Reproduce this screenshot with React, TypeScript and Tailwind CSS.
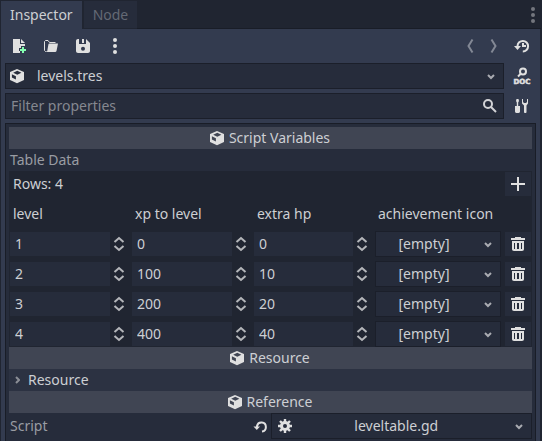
import type { ReactNode } from "react";

type IconProps = { children: ReactNode; className?: string };

function Icon({ children, className = "fill-[#e0e0e0]" }: IconProps) {
  return (
    <svg viewBox="0 0 16 16" className={`h-4 w-4 shrink-0 ${className}`} aria-hidden="true">
      {children}
    </svg>
  );
}

const CubeIcon = () => (
  <Icon>
    <path
      fillRule="evenodd"
      d="M8 .9 15 4v8l-7 3.200L1 12V4zM8.300 2.800 4.200 4.700l4.100 2 4.100-2zM2.900 6.300v3.200l4 2V8.300z"
    />
  </Icon>
);

const NewIcon = () => (
  <Icon>
    <path d="M2 1v14h7v-2H8v-3h2V8h4V6H9V1zM10 1v4h4z" />
    <path className="fill-[#84ffb1]" d="M11 9h2v2h2v2h-2v2h-2v-2H9v-2h2z" />
  </Icon>
);

const FolderIcon = () => (
  <Icon>
    <path
      d="M3.500 13.500H2.500l-1-1V3.500l1-1h2.500l1.500 2h6"
      className="fill-none stroke-[#e0e0e0]"
    />
    <path d="M6.500 5.500H15l-1.500 7.500c-.2.700-.7 1-1.300 1H3c.9-.2 1.200-.7 1.300-1.300l1-5.800c.2-.9.500-1.400 1.200-1.400z" />
  </Icon>
);

const SaveIcon = () => (
  <Icon>
    <path
      fillRule="evenodd"
      d="M3 1C1.900 1 1 1.900 1 3v10c0 1.100.9 2 2 2h10c1.100 0 2-.9 2-2V5l-4-4v5H4V1zM8 8.700a2 2 0 1 1 0 4 2 2 0 0 1 0-4z"
    />
    <path d="M7 1h2v4H7z" />
  </Icon>
);

const DotsIcon = ({ className }: { className?: string }) => (
  <Icon className={className}>
    <circle cx="8" cy="2" r="2" />
    <circle cx="8" cy="8" r="2" />
    <circle cx="8" cy="14" r="2" />
  </Icon>
);

const HistoryIcon = () => (
  <Icon>
    <path
      d="M3.500 9V8a5.300 5.300 0 1 1 5.300 5.500"
      className="fill-none stroke-[#e0e0e0] stroke-2"
    />
    <path d="M0 8h7l-3.500 4zM8 5h2v2h2v2H8z" />
  </Icon>
);

const DocIcon = () => (
  <Icon className="overflow-visible fill-[#e0e0e0]">
    <circle cx="9" cy="3.500" r="3" className="fill-none stroke-[#e0e0e0] stroke-2" />
    <path d="M7 5.500 4 8.500" className="stroke-[#e0e0e0] stroke-2" />
    <text
      x="8"
      y="16"
      textAnchor="middle"
      className="stroke-[#e0e0e0] stroke-[0.5] font-['DejaVu_Sans'] text-[7px] font-bold"
    >
      DOC
    </text>
  </Icon>
);

const ToolsIcon = () => (
  <Icon>
    <path d="M2.500 1h2l.5 2-.8 1.500V8H6v5.500C6 15 5 15 3.500 15S1 15 1 13.500V8h1.800V4.500L2 3zM8 1h1v3l1 1h2l1-1V1h1v4.500L12.500 7.500V14c0 .6-.4 1-1.200 1s-1.300-.4-1.300-1V7.500L8 5.500z" />
  </Icon>
);

const SearchIcon = () => (
  <Icon>
    <circle cx="6" cy="6" r="4" className="fill-none stroke-[#d2d3d6] stroke-2" />
    <path d="m9 9 5 5" className="stroke-[#d2d3d6] stroke-2" />
  </Icon>
);

const TrashIcon = () => (
  <Icon>
    <path d="M5 1h6v1h4v2H1V2h4z" />
    <path
      fillRule="evenodd"
      d="M2 5h12v8c0 1.300-.7 2-2 2H4c-1.300 0-2-.7-2-2zM4 7v6h1V7zM7 7v6h2V7zM11 7v6h1V7z"
    />
  </Icon>
);

const PlusIcon = () => (
  <Icon>
    <path d="M7 1h2v6h6v2H9v6H7V9H1V7h6z" />
  </Icon>
);

const RevertIcon = () => (
  <Icon>
    <path
      d="M4 10V8a4.500 4.500 0 1 1 5 5.500"
      className="fill-none stroke-[#e0e0e0] stroke-2"
    />
    <path d="M.500 8.500h6.500L3.800 12z" />
  </Icon>
);

const GearIcon = () => (
  <Icon>
    <circle cx="8" cy="8" r="3.500" className="fill-none stroke-[#e0e0e0] stroke-3" />
    <path
      d="M8 1v3M8 12v3M1 8h3M12 8h3M3 3l2.200 2.200M10.800 10.800 13 13M13 3l-2.200 2.200M5.200 10.800 3 13"
      className="stroke-[#e0e0e0] stroke-[2.4]"
    />
  </Icon>
);

function Chevron({ dir }: { dir: "left" | "right" }) {
  return (
    <Icon>
      <path
        d={dir === "left" ? "M10.500 1.500 6.500 8l4 6.500" : "M5.500 1.500 9.500 8l-4 6.500"}
        className="fill-none stroke-[#838895] stroke-2"
      />
    </Icon>
  );
}

type PickerProps = { label: string; value: string; className: string; arrow: string };

function Picker({ label, value, className, arrow }: PickerProps) {
  return (
    <div className="relative min-w-0 grow">
      <select
        aria-label={label}
        className={`block h-[26px] w-full appearance-none border border-[#1b1f2a] bg-[#262c3b] outline-none ${className}`}
      >
        <option>{value}</option>
      </select>
      <svg
        viewBox="0 0 8 6"
        className={`pointer-events-none absolute top-[11px] h-1.5 w-2 ${arrow}`}
        aria-hidden="true"
      >
        <path d="m1 1 3 3 3-3" className="fill-none stroke-[#a9abb1] stroke-2" />
      </svg>
    </div>
  );
}

function Category({ title }: { title: string }) {
  return (
    <h2 className="flex h-[22px] items-center justify-center gap-1 bg-[#404553] pr-0.5">
      <CubeIcon />
      {title}
    </h2>
  );
}

function NumberField({ label, value }: { label: string; value: number }) {
  return (
    <div className="flex h-6 items-center">
      <input
        type="text"
        inputMode="numeric"
        aria-label={label}
        defaultValue={value}
        className="h-6 w-0 grow bg-[#262c3b] px-[5px] pb-0.5 outline-none"
      />
      <svg viewBox="0 0 18 16" className="h-4 w-[18px] shrink-0" aria-hidden="true">
        <path
          d="M4.500 6 9 2l4.500 4M4.500 10 9 14l4.500-4"
          className="fill-none stroke-[#b4b6ba] stroke-2"
        />
      </svg>
    </div>
  );
}

const columns = ["level", "xp to level", "extra hp", "achievement icon"];
const rows = [
  [1, 0, 0],
  [2, 100, 10],
  [3, 200, 20],
  [4, 400, 40],
];
const rowGrid =
  "grid h-[26px] grid-cols-[118fr_118fr_117fr_126fr_26px] items-center gap-1";

function LevelTable() {
  return (
    <section className="bg-[#202531] px-px">
      <div className="flex h-[26px] items-center justify-between">
        <span className="pl-[3px]">Rows: 4</span>
        <button
          aria-label="Add row"
          className="flex h-6 w-[26px] items-center justify-center bg-[#262c3b]"
        >
          <PlusIcon />
        </button>
      </div>
      <table className="block pt-1">
        <thead className="block">
          <tr className={rowGrid}>
            {columns.map((name) => (
              <th key={name} className="pl-[3px] text-left font-normal whitespace-nowrap">
                {name}
              </th>
            ))}
          </tr>
        </thead>
        <tbody className="flex flex-col gap-1 pt-1">
          {rows.map((row) => (
            <tr key={row[0]} className={rowGrid}>
              {row.map((value, i) => (
                <td key={columns[i]}>
                  <NumberField label={`${columns[i]}, row ${row[0]}`} value={value} />
                </td>
              ))}
              <td>
                <Picker
                  label={`achievement icon, row ${row[0]}`}
                  value="[empty]"
                  className="pr-7 text-center [text-align-last:center]"
                  arrow="right-[9px]"
                />
              </td>
              <td>
                <button
                  aria-label={`Delete row ${row[0]}`}
                  className="flex h-6 w-[26px] items-center justify-center bg-[#262c3b]"
                >
                  <TrashIcon />
                </button>
              </td>
            </tr>
          ))}
        </tbody>
      </table>
    </section>
  );
}

export default function App() {
  return (
    <main className="flex h-screen flex-col overflow-hidden bg-[#202531] px-px pt-px font-['Noto_Sans',sans-serif] text-sm leading-5 text-[#cdcfd3]">
      <nav className="flex h-7 shrink-0 items-stretch" role="tablist">
        <button role="tab" aria-selected="true" className="bg-[#333b4f] px-[9px]">
          Inspector
        </button>
        <button
          role="tab"
          aria-selected="false"
          className="mb-px ml-0.5 bg-[#262c3b] px-[9px] text-[#646975]"
        >
          Node
        </button>
        <div className="flex grow justify-end border-b border-[#191d27]">
          <button aria-label="Dock options" className="flex items-center">
            <DotsIcon className="fill-[#73767e]" />
          </button>
        </div>
      </nav>

      <div className="mr-px flex min-h-0 grow flex-col bg-[#333b4f] px-1">
        <div className="flex h-[34px] shrink-0 items-center gap-4 pr-1.5 pl-1.5">
          <button aria-label="New resource">
            <NewIcon />
          </button>
          <button aria-label="Load resource">
            <FolderIcon />
          </button>
          <button aria-label="Save resource">
            <SaveIcon />
          </button>
          <button aria-label="More options">
            <DotsIcon />
          </button>
          <div className="ml-auto flex gap-2">
            <button aria-label="Previous object">
              <Chevron dir="left" />
            </button>
            <button aria-label="Next object">
              <Chevron dir="right" />
            </button>
          </div>
          <button aria-label="History" className="-ml-1">
            <HistoryIcon />
          </button>
        </div>

        <div className="flex shrink-0 items-center">
          <div className="relative flex grow items-center">
            <Picker
              label="Edited resource"
              value="levels.tres"
              className="pl-[31px]"
              arrow="right-[9px]"
            />
            <span className="pointer-events-none absolute left-1">
              <CubeIcon />
            </span>
          </div>
          <button aria-label="Open documentation" className="flex w-8 justify-center pl-1">
            <DocIcon />
          </button>
        </div>

        <div className="mt-1 flex shrink-0 items-center">
          <label className="flex h-[26px] grow items-center border border-[#1b1f2a] bg-[#262c3b] pr-[5px] pl-[5px]">
            <input
              type="text"
              aria-label="Filter properties"
              placeholder="Filter properties"
              className="w-0 grow bg-transparent outline-none placeholder:text-[#858890]"
            />
            <SearchIcon />
          </label>
          <button aria-label="Property tools" className="flex w-8 justify-center pl-1">
            <ToolsIcon />
          </button>
        </div>

        <div className="mt-1 min-h-0 grow overflow-hidden border border-b-0 border-[#191d27] bg-[#262c3b] px-[3px] pt-[3px]">
          <Category title="Script Variables" />
          <h3 className="h-[22px] pl-px leading-[22px] text-[#999ca3]">Table Data</h3>
          <LevelTable />
          <Category title="Resource" />
          <button className="flex h-[22px] w-full items-center gap-2 bg-[#2c3242] pl-1.5">
            <svg viewBox="0 0 5 8" className="h-2 w-[5px]" aria-hidden="true">
              <path d="m1 1 3 3-3 3" className="fill-none stroke-[#8b8e96] stroke-2" />
            </svg>
            Resource
          </button>
          <Category title="Reference" />
          <div className="flex items-center">
            <div className="flex w-1/2 items-center justify-between pl-px">
              <span className="text-[#999ca3]">Script</span>
              <button aria-label="Revert script" className="pr-0.5">
                <RevertIcon />
              </button>
            </div>
            <div className="relative flex w-1/2 items-center">
              <Picker
                label="Script"
                value="leveltable.gd"
                className="pr-2.5 text-center [text-align-last:center]"
                arrow="right-[9px]"
              />
              <span className="pointer-events-none absolute left-1.5">
                <GearIcon />
              </span>
            </div>
          </div>
        </div>
      </div>
    </main>
  );
}
